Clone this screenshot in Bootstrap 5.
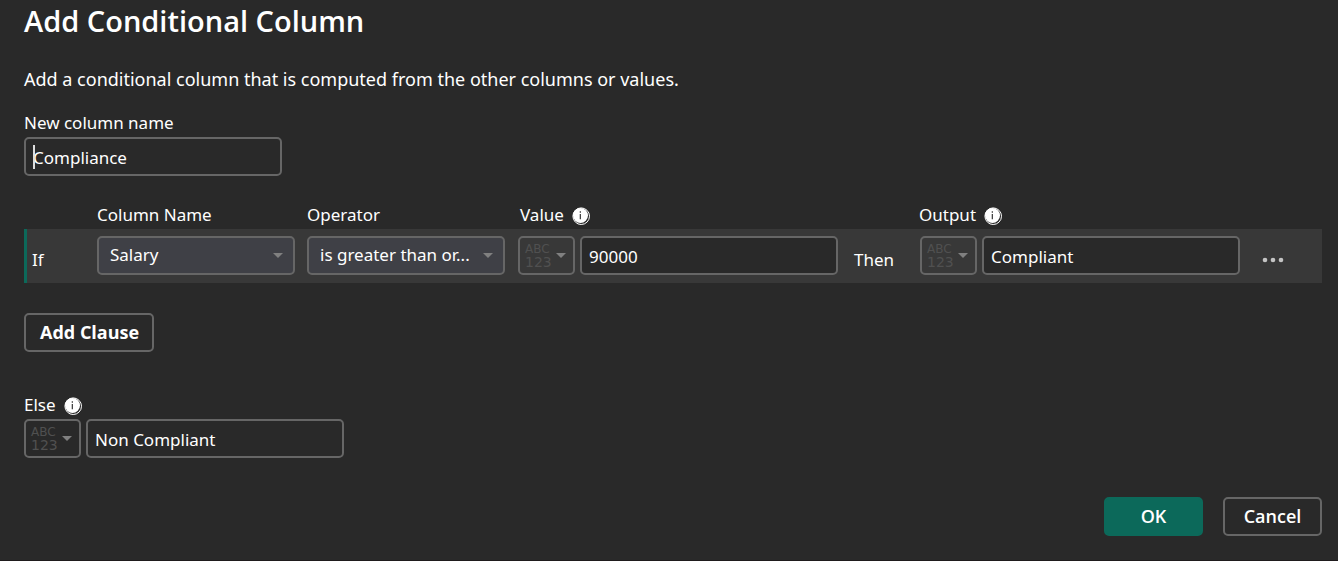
<!DOCTYPE html>
<html lang="en" data-bs-theme="dark">
<head>
<meta charset="utf-8">
<meta name="viewport" content="width=device-width, initial-scale=1">
<title>Add Conditional Column</title>
<link href="https://cdn.jsdelivr.net/npm/bootstrap@5.3.0/dist/css/bootstrap.min.css" rel="stylesheet">
<style>
  body {
    background: #292929;
    color: #fff;
    font-family: "Segoe UI", "Noto Sans", "Open Sans", sans-serif;
    font-size: 17px;
    line-height: 24px;
  }
  .dialog { min-height: 100vh; padding: 0 16px 24px 24px; border-bottom: 1px solid #1f1b1d; }
  .dialog-title { font-size: 29px; line-height: 42px; font-weight: 600; font-family: "Segoe UI", "Open Sans", sans-serif; }
  .intro { font-size: 18px; line-height: 28px; margin-top: 23px; margin-bottom: 18px; }

  .form-control, .form-select, .btn {
    height: 39px;
    border: 2px solid #666;
    border-radius: 5px;
    font-size: 17px;
    line-height: 24px;
    color: #fff;
  }
  .form-control { background: #292929; width: 258px; padding: 6px 7px 5px; }
  .form-select {
    background-color: #3f4046;
    background-image: url("data:image/svg+xml,%3Csvg xmlns='http://www.w3.org/2000/svg' viewBox='0 0 10 5'%3E%3Cpath fill='%23808080' d='M0 0h10L5 5z'/%3E%3C/svg%3E");
    background-size: 10px 5px;
    background-position: right 10px center;
    padding: 5px 24px 6px 11px;
  }
  .btn { font-size: 18px; font-weight: 600; padding: 4px 13px 6px; font-family: "Segoe UI", "Open Sans", sans-serif; }
  .btn:hover { border-color: #888; color: #fff; }
  .btn-add { font-weight: 700; padding-left: 14px; }
  .btn-ok { background: #0c695a; border-color: #0c695a; }
  .btn-ok:hover { background: #0e7868; }
  .footer-btn { width: 99px; }

  .type-btn { width: 57px; padding: 0 7px 0 5px; }
  .type-text { color: #505050; font: 14px/14px "DejaVu Sans", sans-serif; text-align: left; }
  .type-text small { display: block; font-size: 12px; line-height: 12px; }
  .down-arrow { border: 5px solid transparent; border-top-color: #808080; border-bottom: 0; }

  .name-field { margin-top: 2px; margin-bottom: 27px; }
  .caret-line { position: absolute; left: 9px; top: 8px; width: 2px; height: 24px; background: #ddd; }
  .pair { gap: 5px; }

  .clause-grid {
    display: grid;
    grid-template-columns: 53px 198px 198px 325px 53px 321px 1fr;
    column-gap: 12px;
    padding-left: 5px;
    border-left: 3px solid transparent;
  }
  .clause-grid .pair { padding-left: 1px; }
  .clause-head { margin-bottom: 2px; }
  .value-head { padding-left: 3px; }
  .clause-row { background: #383838; border-left-color: #0c695a; padding-top: 7px; padding-bottom: 8px; }
  .row-word { padding-top: 12px; }
  .more-btn { border: 0; background: none; padding: 6px 0 0 10px; height: 39px; }
  .info-icon { margin-top: 2px; }
  .add-wrap { margin-top: 30px; margin-bottom: 41px; }
  .else-head { margin-bottom: 2px; }
  .footer { margin-top: 39px; gap: 20px; }
</style>
</head>
<body>
<svg class="d-none" aria-hidden="true">
  <symbol id="info" viewBox="0 0 18 18">
    <circle cx="9.200" cy="9.200" r="8.300" fill="#292929" stroke="#fff" stroke-width="1"/>
    <circle cx="8.500" cy="8.500" r="7.500" fill="#fff"/>
    <path d="M7.700 4.200h1.300v1.600H7.700zM7.700 7h1.300v5.300H7.700z" fill="#444"/>
  </symbol>
</svg>
<main class="dialog">
  <h1 class="dialog-title m-0">Add Conditional Column</h1>
  <p class="intro">Add a conditional column that is computed from the other columns or values.</p>

  <label for="colname" class="d-block">New column name</label>
  <div class="position-relative name-field">
    <input id="colname" type="text" class="form-control" value="Compliance">
    <span class="caret-line"></span>
  </div>

  <div class="clause-grid clause-head">
    <span></span>
    <label for="column">Column Name</label>
    <label for="operator">Operator</label>
    <div class="d-flex align-items-center gap-2 value-head"><label for="value">Value</label><svg class="info-icon" width="18" height="18" aria-hidden="true"><use href="#info"/></svg></div>
    <span></span>
    <div class="d-flex align-items-center gap-2"><label for="output">Output</label><svg class="info-icon" width="18" height="18" aria-hidden="true"><use href="#info"/></svg></div>
  </div>
  <div class="clause-grid clause-row">
    <span class="row-word">If</span>
    <select id="column" class="form-select"><option>Salary</option></select>
    <select id="operator" class="form-select"><option>is greater than or...</option></select>
    <div class="d-flex pair">
      <button type="button" class="btn type-btn d-flex align-items-center justify-content-between" aria-label="Value type"><span class="type-text"><small>ABC</small>123</span><span class="down-arrow"></span></button>
      <input id="value" type="text" class="form-control" value="90000">
    </div>
    <span class="row-word">Then</span>
    <div class="d-flex pair">
      <button type="button" class="btn type-btn d-flex align-items-center justify-content-between" aria-label="Output type"><span class="type-text"><small>ABC</small>123</span><span class="down-arrow"></span></button>
      <input id="output" type="text" class="form-control" value="Compliant">
    </div>
    <div><button type="button" class="more-btn" aria-label="More options"><svg width="22" height="6" fill="#c4c4c4"><circle cx="3" cy="3" r="2.300"/><circle cx="11" cy="3" r="2.300"/><circle cx="19" cy="3" r="2.300"/></svg></button></div>
  </div>

  <div class="add-wrap"><button type="button" class="btn btn-add">Add Clause</button></div>

  <div class="d-flex align-items-center gap-2 else-head"><label for="else">Else</label><svg class="info-icon" width="18" height="18" aria-hidden="true"><use href="#info"/></svg></div>
  <div class="d-flex pair">
    <button type="button" class="btn type-btn d-flex align-items-center justify-content-between" aria-label="Else type"><span class="type-text"><small>ABC</small>123</span><span class="down-arrow"></span></button>
    <input id="else" type="text" class="form-control" value="Non Compliant">
  </div>

  <div class="footer d-flex justify-content-end">
    <button type="button" class="btn btn-ok footer-btn">OK</button>
    <button type="button" class="btn footer-btn">Cancel</button>
  </div>
</main>
<script src="https://cdn.jsdelivr.net/npm/bootstrap@5.3.0/dist/js/bootstrap.bundle.min.js"></script>
</body>
</html>
